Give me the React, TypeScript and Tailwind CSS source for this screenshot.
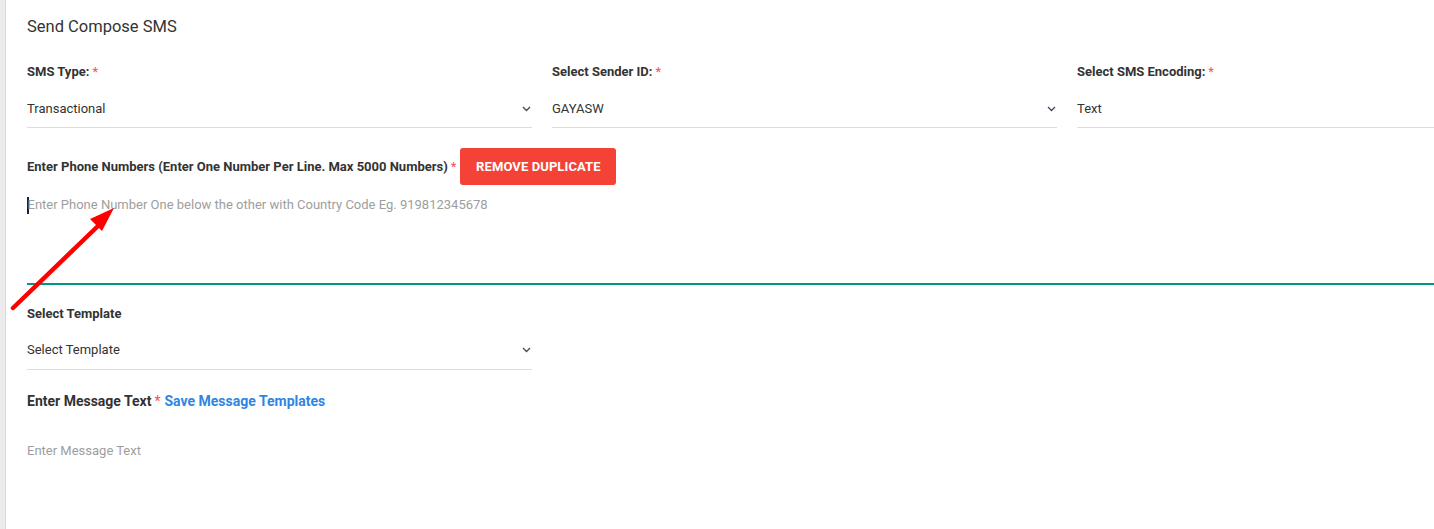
import React from "react";

const Chevron = () => (
  <svg width="9" height="6" viewBox="0 0 9 6" className="shrink-0">
    <polyline points="1,1 4.5,4.5 8,1" fill="none" stroke="#3b4a5a" strokeWidth="1.3" />
  </svg>
);

const Star = () => <span className="text-[#f0525a] font-normal ml-[3px]">*</span>;

const Field = ({ label, value }: { label: string; value: string }) => (
  <div className="flex flex-col">
    <div className="h-[20px] mt-[62px] leading-[20px] text-[13px] font-bold text-[#333]">
      {label}
      <Star />
    </div>
    <div className="mt-[8px] h-[38px] flex items-center justify-between border-b border-[#dcdcdc] text-[13px] text-[#333] pr-[1px]">
      <span>{value}</span>
      <Chevron />
    </div>
  </div>
);

export default function App() {
  return (
    <div
      className="relative flex h-[529px] w-[1434px] overflow-hidden bg-white"
      style={{ fontFamily: "Roboto, 'Liberation Sans', sans-serif" }}
    >
      <div className="w-[6px] shrink-0 bg-[#ececec] border-r border-[#d9d9d9]" />
      <div className="pl-[21px] flex-1 overflow-hidden">
        <div className="w-[1555px]">
          <div className="pt-[16px] h-[22px] box-content leading-[22px] text-[16.5px] text-[#333]">
            Send Compose SMS
          </div>
          <div className="grid grid-cols-3 gap-x-[20px] -mt-[38px]">
            <Field label="SMS Type:" value="Transactional" />
            <Field label="Select Sender ID:" value="GAYASW" />
            <div className="flex flex-col">
              <div className="h-[20px] mt-[62px] leading-[20px] text-[13px] font-bold text-[#333]">
                Select SMS Encoding:
                <Star />
              </div>
              <div className="mt-[8px] h-[38px] flex items-center border-b border-[#dcdcdc] text-[13px] text-[#333]">
                Text
              </div>
            </div>
          </div>
          <div className="mt-[20px] flex items-center h-[37px]">
            <span className="text-[13px] font-bold text-[#333]">
              Enter Phone Numbers (Enter One Number Per Line. Max 5000 Numbers)
              <Star />
            </span>
            <button className="ml-[4px] h-[37px] w-[156px] rounded-[3px] bg-[#f44336] text-white text-[13px] font-bold uppercase tracking-[0.1px]">
              Remove Duplicate
            </button>
          </div>
          <div className="mt-[1px] h-[99px] border-b-2 border-[#009688] w-[1407px] pt-[9px]">
            <div className="flex items-center h-[20px] text-[13px] text-[#9e9e9e]">
              <span className="w-[1.5px] h-[17px] bg-[#222] mr-[-1px]" />
              Enter Phone Number One below the other with Country Code Eg. 919812345678
            </div>
          </div>
          <div className="w-[505px]">
            <div className="mt-[19px] h-[20px] leading-[20px] text-[13px] font-bold text-[#333]">
              Select Template
            </div>
            <div className="mt-[7px] h-[39px] flex items-center justify-between border-b border-[#dcdcdc] text-[13px] text-[#333] pr-[1px]">
              <span>Select Template</span>
              <Chevron />
            </div>
          </div>
          <div className="mt-[21px] h-[20px] leading-[20px] text-[14px] font-bold text-[#333]">
            Enter Message Text
            <span className="text-[#f0525a] font-normal ml-[3px]">*</span>
            <span className="ml-[4px] text-[#2f86e0]">Save Message Templates</span>
          </div>
          <div className="mt-[30px] h-[20px] leading-[20px] text-[13px] text-[#9e9e9e]">
            Enter Message Text
          </div>
        </div>
      </div>
      <svg
        className="absolute left-0 top-0 pointer-events-none"
        width="200"
        height="340"
        viewBox="0 0 200 340"
      >
        <line x1="13" y1="308" x2="98" y2="226" stroke="#ff0000" strokeWidth="4.5" strokeLinecap="round" />
        <polygon points="114,208 90,219 102,231" fill="#ff0000" />
      </svg>
    </div>
  );
}
